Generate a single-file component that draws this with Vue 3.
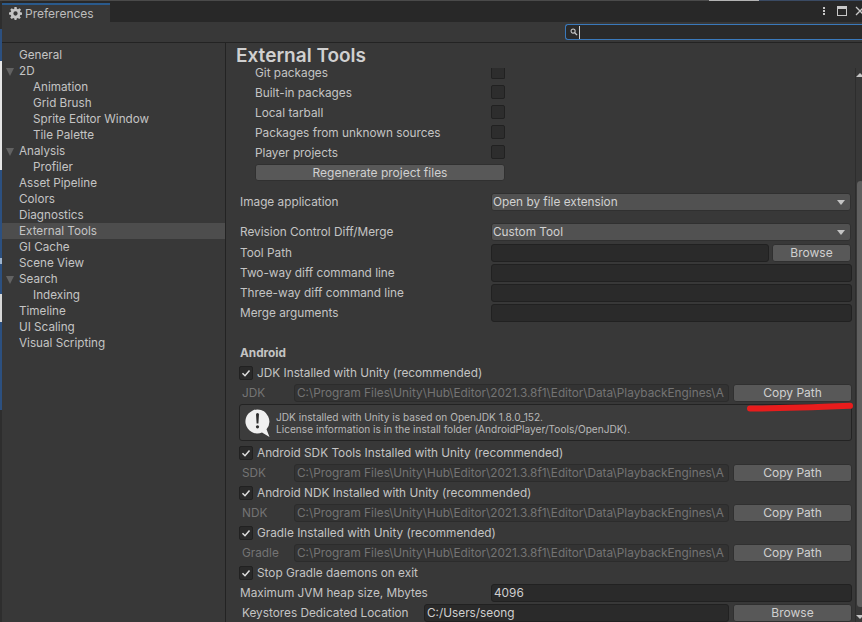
<script setup>
const nav = [
  { t: 'General' },
  { t: '2D', open: true },
  { t: 'Animation', sub: true },
  { t: 'Grid Brush', sub: true },
  { t: 'Sprite Editor Window', sub: true },
  { t: 'Tile Palette', sub: true },
  { t: 'Analysis', open: true },
  { t: 'Profiler', sub: true },
  { t: 'Asset Pipeline' },
  { t: 'Colors' },
  { t: 'Diagnostics' },
  { t: 'External Tools', active: true },
  { t: 'GI Cache' },
  { t: 'Scene View' },
  { t: 'Search', open: true },
  { t: 'Indexing', sub: true },
  { t: 'Timeline' },
  { t: 'UI Scaling' },
  { t: 'Visual Scripting' }
]
const packages = ['Git packages', 'Built-in packages', 'Local tarball', 'Packages from unknown sources', 'Player projects']
const diffs = ['Two-way diff command line', 'Three-way diff command line', 'Merge arguments']
const path = 'C:\\Program Files\\Unity\\Hub\\Editor\\2021.3.8f1\\Editor\\Data\\PlaybackEngines\\A'
const tools = [
  { check: 'Android SDK Tools Installed with Unity (recommended)', label: 'SDK' },
  { check: 'Android NDK Installed with Unity (recommended)', label: 'NDK' },
  { check: 'Gradle Installed with Unity (recommended)', label: 'Gradle' }
]
</script>

<template>
  <div class="win">
    <div class="tabbar">
      <div class="tab">
        <svg class="gear" viewBox="0 0 14 14" width="13" height="13">
          <path fill="#c4c4c4" fill-rule="evenodd" d="M5.8 0h2.4l.3 1.9 1.2.5L11.300 1.300 13 3 11.800 4.500l.5 1.200 1.700.300v2.400l-1.900.3-.5 1.200L12.700 11.300 11 13 9.500 11.800l-1.200.5L8 14H6l-.3-1.700-1.200-.5L3 13 1.300 11.300 2.400 9.800l-.5-1.200L0 8.200V5.800l1.900-.3.500-1.200L1.300 3 3 1.300l1.500 1.100 1.200-.5zM7 4.700A2.300 2.300 0 1 0 7 9.300 2.300 2.300 0 1 0 7 4.700z" />
        </svg>
        <span>Preferences</span>
      </div>
      <div class="winicons">
        <span class="dots"><i></i><i></i><i></i></span>
        <span class="maxi"></span>
        <svg class="close" width="10" height="10" viewBox="0 0 10 10"><path d="M1 1l8 8M9 1l-8 8" stroke="#c8c8c8" stroke-width="1.300" /></svg>
      </div>
    </div>
    <div class="toolbar">
      <div class="search">
        <svg width="8" height="8" viewBox="0 0 9 9"><circle cx="3.500" cy="3.500" r="2.300" fill="none" stroke="#c8c8c8" stroke-width="1.200" /><path d="M5.300 5.300L8 8" stroke="#c8c8c8" stroke-width="1.500" /></svg>
        <i class="caret"></i>
      </div>
    </div>
    <div class="body">
      <aside class="nav">
        <div v-for="n in nav" :key="n.t" class="navitem" :class="{ sub: n.sub, active: n.active }">
          <span v-if="n.open" class="tri"></span>{{ n.t }}
        </div>
      </aside>
      <main class="main">
        <h1>External Tools</h1>
        <div class="pkgs">
          <div v-for="p in packages" :key="p" class="pkg">
            <span>{{ p }}</span><span class="box dim"></span>
          </div>
        </div>
        <button class="btn regen">Regenerate project files</button>

        <div class="row image"><label>Image application</label><div class="select">Open by file extension<b></b></div></div>
        <div class="row rev"><label>Revision Control Diff/Merge</label><div class="select">Custom Tool<b></b></div></div>
        <div class="row tool"><label>Tool Path</label><div class="input flex"></div><button class="btn browse">Browse</button></div>
        <div v-for="d in diffs" :key="d" class="row diff"><label>{{ d }}</label><div class="input flex"></div></div>

        <div class="section">Android</div>
        <div class="check"><span class="box"><svg viewBox="0 0 12 12" width="12" height="12"><path d="M2.500 6.200l2.500 2.500 4.500-5.200" fill="none" stroke="#dedede" stroke-width="1.500" /></svg></span>JDK Installed with Unity (recommended)</div>
        <div class="pathrow"><label>JDK</label><div class="input flex path">{{ path }}</div><button class="btn side">Copy Path</button></div>
        <div class="help">
          <svg class="info" width="25" height="28" viewBox="0 0 25 28">
            <path fill="#efefef" d="M12.500 .5a12 12 0 1 0 4.500 23.100L24.500 28l-3-7.800A12 12 0 0 0 12.500 .5z" />
            <path fill="#2d2d2d" d="M11 5.500a1.500 1.500 0 0 1 3 0L13.400 14.500h-1.800z" />
            <circle cx="12.500" cy="17.800" r="1.600" fill="#2d2d2d" />
          </svg>
          <p>JDK installed with Unity is based on OpenJDK 1.8.0_152.<br />License information is in the install folder (AndroidPlayer/Tools/OpenJDK).</p>
        </div>
        <template v-for="t in tools" :key="t.label">
          <div class="check"><span class="box"><svg viewBox="0 0 12 12" width="12" height="12"><path d="M2.500 6.200l2.500 2.500 4.500-5.200" fill="none" stroke="#dedede" stroke-width="1.500" /></svg></span>{{ t.check }}</div>
          <div class="pathrow"><label>{{ t.label }}</label><div class="input flex path">{{ path }}</div><button class="btn side">Copy Path</button></div>
        </template>
        <div class="check"><span class="box"><svg viewBox="0 0 12 12" width="12" height="12"><path d="M2.500 6.200l2.500 2.500 4.500-5.200" fill="none" stroke="#dedede" stroke-width="1.500" /></svg></span>Stop Gradle daemons on exit</div>
        <div class="row heap"><label>Maximum JVM heap size, Mbytes</label><div class="input flex val">4096</div></div>
        <div class="row keys"><label>Keystores Dedicated Location</label><div class="input flex val">C:/Users/seong</div><button class="btn side">Browse</button></div>

        <svg class="mark" width="108" height="11" viewBox="0 0 108 11"><path d="M4 6.500C30 6.500 50 6 104 3.800" fill="none" stroke="#e81c1c" stroke-width="6" stroke-linecap="round" /></svg>
      </main>
      <div class="scroll"><span class="up"></span><span class="thumb"></span><span class="down"></span></div>
    </div>
  </div>
</template>

<style>
html, body { margin: 0; background: #383838; }
</style>

<style scoped>
.win { width: 862px; height: 622px; overflow: hidden; background: #383838; color: #c4c4c4; font: 11.800px/16px "Inter", "Noto Sans", sans-serif; display: flex; flex-direction: column; position: relative; }
.win::before { content: ""; position: absolute; left: 0; top: 0; bottom: 0; width: 2px; z-index: 2; background: linear-gradient(to bottom, #2e2e2e 0 29px, #2c5080 29px 61px, #e6e6e6 61px 170px, #2c5080 170px 258px, #9db4cf 258px 264px, #2c5080 264px 294px, #d8d8d8 294px 322px, #2c5080 322px 410px, #2e2e2e 410px); }
.win::after { content: ""; position: absolute; left: 0; right: 0; top: 0; height: 1px; z-index: 2; background: linear-gradient(to right, #4a4a4a 0 709px, #b4b4b4 709px 759px, #3a4a63 759px); }
.tabbar { height: 22px; flex: none; box-sizing: border-box; padding-top: 3px; background: #282828; display: flex; justify-content: space-between; border-left: 2px solid #3a3a3a; }
.tab { width: 108px; height: 19px; background: #383838; border-top: 2px solid #2a5a8c; display: flex; align-items: center; gap: 3px; padding-left: 7px; box-sizing: border-box; color: #bdbdbd; font-size: 12px; }
.winicons { display: flex; align-items: center; gap: 8px; margin-top: -3px; }
.dots { display: flex; flex-direction: column; gap: 1px; margin-right: 4px; }
.dots i { width: 2px; height: 2px; background: #c8c8c8; display: block; }
.maxi { width: 8px; height: 6px; border: 1px solid #c8c8c8; border-top-width: 3px; }
.close { margin-right: -3px; }
.toolbar { height: 21px; flex: none; box-sizing: border-box; background: #383838; border-bottom: 1px solid #232323; display: flex; justify-content: flex-end; padding-top: 2px; }
.search { width: 297px; height: 16px; box-sizing: border-box; border: 1px solid #3a79bb; border-right: 0; border-radius: 3px 0 0 3px; background: #2a2a2a; display: flex; align-items: center; gap: 1px; padding-left: 4px; }
.caret { width: 1px; height: 13px; background: #d0d0d0; }
.body { flex: 1; display: flex; min-height: 0; position: relative; }
.nav { width: 226px; flex: none; box-sizing: border-box; border-right: 1px solid #232323; padding: 4px 0 0 2px; }
.navitem { height: 16px; padding-left: 17px; position: relative; font-size: 11.700px; color: #c4c4c4; }
.navitem.sub { padding-left: 31px; }
.navitem.active { background: #4d4d4d; }
.tri { position: absolute; left: 4px; top: 5px; width: 0; height: 0; border-left: 4.500px solid transparent; border-right: 4.500px solid transparent; border-top: 8px solid #626262; }
.main { flex: 1; padding: 0 10px 0 14px; position: relative; min-width: 0; }
h1 { margin: 0 0 0 -4px; box-sizing: border-box; font-size: 19px; font-weight: 600; line-height: 22px; padding-top: 2px; color: #d0d0d0; height: 25px; }
.pkgs { margin-left: 15px; width: 250px; }
.pkg { height: 20px; display: flex; justify-content: space-between; align-items: center; }
.pkg:first-child { margin-top: -5px; }
.box { width: 14px; height: 14px; box-sizing: border-box; flex: none; background: #2a2a2a; border: 1px solid #212121; border-radius: 2px; display: inline-flex; align-items: center; justify-content: center; margin: 0 4px 0 -1px; }
.box.dim { margin: -2px 0 0; background: #2d2d2d; }
.pkg:first-child .box.dim { height: 11px; margin: 0 0 4px; align-self: flex-end; border-top: 0; border-radius: 0 0 2px 2px; }
.btn { font: inherit; font-size: 12px; color: #d0d0d0; background: #585858; border: 1px solid #303030; border-radius: 3px; padding: 0; height: 18px; line-height: 16px; }
.regen { width: 250px; height: 17px; display: block; margin: 1px 0 0 15px; line-height: 15px; }
.row { display: flex; align-items: center; height: 20px; }
.row label { width: 251px; flex: none; }
.select { flex: 1; height: 18px; margin-right: 1px; box-sizing: border-box; background: #515151; border: 1px solid #303030; border-radius: 3px; padding-left: 1px; color: #d2d2d2; line-height: 16px; position: relative; }
.select b { position: absolute; right: 5px; top: 6px; border-left: 4px solid transparent; border-right: 4px solid transparent; border-top: 5px solid #c4c4c4; }
.image { margin-top: 11px; }
.rev { margin-top: 10px; }
.tool { margin-top: 1px; }
.input { height: 18px; box-sizing: border-box; background: #2a2a2a; border: 1px solid #212121; border-radius: 3px; }
.flex { flex: 1; min-width: 0; }
.side { width: 119px; flex: none; margin-left: 4px; }
.browse { width: 79px; flex: none; margin: 0 1px 0 3px; }
.section { font-weight: 700; margin-top: 20px; height: 20px; line-height: 20px; }
.check { height: 20px; display: flex; align-items: center; }
.pathrow { height: 20px; display: flex; align-items: center; color: #747474; }
.pathrow label { width: 54px; flex: none; padding-left: 2px; box-sizing: border-box; }
.path { background: #333; border-color: #2c2c2c; color: #747474; padding-left: 2px; overflow: hidden; white-space: nowrap; line-height: 16px; }
.help { height: 37px; box-sizing: border-box; margin: 1px 0 2px -1px; border: 1px solid #232323; border-radius: 3px; background: #3c3c3c; display: flex; align-items: center; gap: 6px; padding-left: 5px; }
.help p { margin: 0; font-size: 10.150px; line-height: 12px; color: #b8b8b8; }
.info { flex: none; }
.val { color: #d0d0d0; padding-left: 2px; line-height: 16px; }
.keys label { width: 184px; padding-left: 2px; box-sizing: border-box; }
.mark { position: absolute; left: 520px; top: 359px; }
.scroll { position: absolute; right: 0; top: 25px; bottom: 0; width: 7px; border-left: 1px solid #2d2d2d; box-sizing: border-box; }
.up { position: absolute; top: 5px; left: 0; border-left: 4px solid transparent; border-right: 4px solid transparent; border-bottom: 4px solid #c4c4c4; }
.thumb { position: absolute; top: 113px; left: 1px; width: 7px; bottom: 15px; background: #5f5f5f; border-radius: 4px; }
.down { position: absolute; bottom: 3px; left: 0; border-left: 4px solid transparent; border-right: 4px solid transparent; border-top: 4px solid #c4c4c4; }
</style>
